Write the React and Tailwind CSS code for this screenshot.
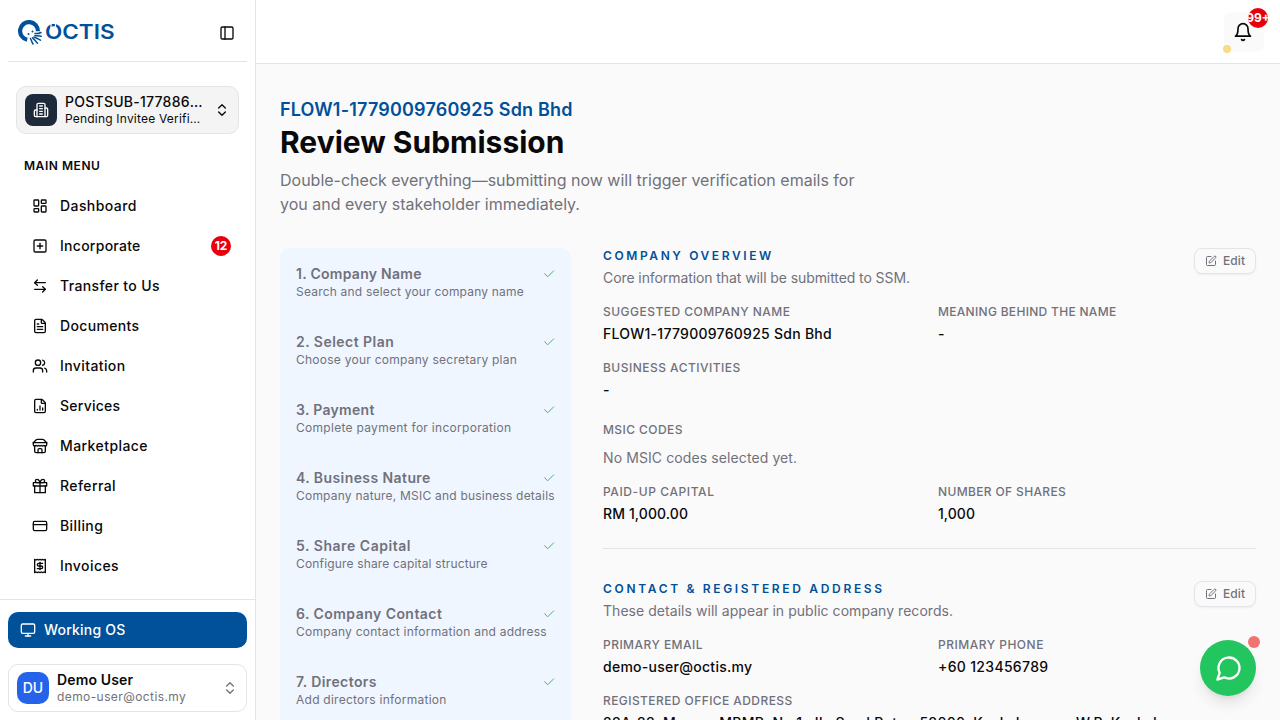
import React from "react";
import {
  PanelLeft,
  ChevronsUpDown,
  LayoutDashboard,
  SquarePlus,
  ArrowLeftRight,
  FileText,
  FileChartColumn,
  CreditCard,
  Monitor,
  SquarePen,
  Users,
} from "lucide-react";

const Icon = ({ size = 16, strokeWidth = 2, children }) => (
  <svg
    width={size}
    height={size}
    viewBox="0 0 24 24"
    fill="none"
    stroke="currentColor"
    strokeWidth={strokeWidth}
    strokeLinecap="round"
    strokeLinejoin="round"
    className="shrink-0"
  >
    {children}
  </svg>
);

const Receipt = () => (
  <Icon>
    <path d="M4 2v20l2-1 2 1 2-1 2 1 2-1 2 1 2-1 2 1V2l-2 1-2-1-2 1-2-1-2 1-2-1-2 1Z" />
    <path d="M16 8h-6a2 2 0 1 0 0 4h4a2 2 0 1 1 0 4H8" />
    <path d="M12 17.5v-11" />
  </Icon>
);

const Building = () => (
  <Icon>
    <path d="M6 22V4a2 2 0 0 1 2-2h8a2 2 0 0 1 2 2v18Z" />
    <path d="M6 12H4a2 2 0 0 0-2 2v6a2 2 0 0 0 2 2h2" />
    <path d="M18 9h2a2 2 0 0 1 2 2v9a2 2 0 0 1-2 2h-2" />
    <path d="M10 6h4M10 10h4M10 14h4M10 18h4" />
  </Icon>
);

const Store = () => (
  <Icon>
    <path d="m2 7 4.41-4.41A2 2 0 0 1 7.83 2h8.34a2 2 0 0 1 1.42.59L22 7" />
    <path d="M4 12v8a2 2 0 0 0 2 2h12a2 2 0 0 0 2-2v-8" />
    <path d="M15 22v-4a2 2 0 0 0-2-2h-2a2 2 0 0 0-2 2v4" />
    <path d="M2 7h20" />
    <path d="M22 7v3a2 2 0 0 1-2 2a2.7 2.7 0 0 1-1.59-.63.7.7 0 0 0-.82 0A2.7 2.7 0 0 1 16 12a2.7 2.7 0 0 1-1.59-.63.7.7 0 0 0-.82 0A2.7 2.7 0 0 1 12 12a2.7 2.7 0 0 1-1.59-.63.7.7 0 0 0-.82 0A2.7 2.7 0 0 1 8 12a2.7 2.7 0 0 1-1.59-.63.7.7 0 0 0-.82 0A2.7 2.7 0 0 1 4 12a2 2 0 0 1-2-2V7" />
  </Icon>
);

const Gift = () => (
  <Icon>
    <path d="M20 12v10H4V12" />
    <path d="M2 7h20v5H2z" />
    <path d="M12 22V7" />
    <path d="M12 7H7.5a2.5 2.5 0 0 1 0-5C11 2 12 7 12 7z" />
    <path d="M12 7h4.5a2.5 2.5 0 0 0 0-5C13 2 12 7 12 7z" />
  </Icon>
);

const Bell = () => (
  <Icon size={20}>
    <path d="M6 8a6 6 0 0 1 12 0c0 7 3 9 3 9H3s3-2 3-9" />
    <path d="M10.3 21a1.94 1.94 0 0 0 3.4 0" />
  </Icon>
);

const menu = [
  { label: "Dashboard", icon: LayoutDashboard, tracking: "tracking-[0.42px]" },
  { label: "Incorporate", icon: SquarePlus, badge: "12", tracking: "tracking-[0.27px]" },
  { label: "Transfer to Us", icon: ArrowLeftRight, tracking: "tracking-[0.38px]" },
  { label: "Documents", icon: FileText, tracking: "tracking-[0.33px]" },
  { label: "Invitation", icon: Users, tracking: "tracking-[0.4px]" },
  { label: "Services", icon: FileChartColumn, tracking: "tracking-[0.25px]" },
  { label: "Marketplace", icon: Store, tracking: "tracking-[0.42px]" },
  { label: "Referral", icon: Gift, tracking: "tracking-[0.42px]" },
  { label: "Billing", icon: CreditCard, tracking: "tracking-[0.4px]" },
  { label: "Invoices", icon: Receipt, tracking: "tracking-[0.42px]" },
];

const steps = [
  { title: "1. Company Name", text: "Search and select your company name", t1: "tracking-[0.27px]", t2: "tracking-[0.2px]" },
  { title: "2. Select Plan", text: "Choose your company secretary plan", t1: "tracking-[0.47px]", t2: "tracking-[0.25px]" },
  { title: "3. Payment", text: "Complete payment for incorporation", t1: "tracking-[0.3px]", t2: "tracking-[0.29px]" },
  { title: "4. Business Nature", text: "Company nature, MSIC and business details", t1: "tracking-[0.42px]", t2: "tracking-[0.21px]" },
  { title: "5. Share Capital", text: "Configure share capital structure", t1: "tracking-[0.54px]", t2: "tracking-[0.16px]" },
  { title: "6. Company Contact", text: "Company contact information and address", t1: "tracking-[0.45px]", t2: "tracking-[0.24px]" },
  { title: "7. Directors", text: "Add directors information", t1: "tracking-[0.4px]", t2: "tracking-[0.25px]" },
];

const Logo = () => (
  <svg width="98" height="27" viewBox="0 0 98 27" className="shrink-0">
    <path d="M9.2 20.7A8.9 8.9 0 1 1 19.9 12.3" fill="none" stroke="#01509a" strokeWidth="4.2" />
    <circle cx="10.5" cy="15" r="1" fill="#01509a" />
    <circle cx="14.5" cy="12.5" r="1" fill="#01509a" />
    <g fill="none" stroke="#01509a" strokeWidth="1.5" strokeLinecap="round">
      <path d="M17 14.5c2.5 .3 4 .2 6-1" />
      <path d="M17 16.5c2.5 .3 4 .8 6.3 .7" />
      <path d="M16 18c2.5 .8 4.3 2 6.5 3.2" />
      <path d="M14.5 18.8c2 1.500 3 3.5 5 5.5" />
      <path d="M12.5 19.5c1 2 1.3 3.7 2.5 5.5" />
    </g>
    <text x="27" y="20" textLength="69.5" lengthAdjust="spacingAndGlyphs" fill="#01509a" className="font-['Inter'] text-[20px] font-semibold">
      OCTIS
    </text>
    {/* notches in the top of the O */}
    <path d="M33 4v5M37.500 4v5" stroke="#fff" strokeWidth="1.2" />
  </svg>
);

const Sidebar = () => (
  <aside className="flex h-full w-64 shrink-0 flex-col border-r border-[#e4e4e7] bg-white">
    <div className="mx-2 flex h-[62px] shrink-0 items-center justify-between border-b border-[#e4e4e7] pt-1 pr-3 pl-2.5">
      <Logo />
      <PanelLeft size={16} />
    </div>

    <div className="px-4 pt-6">
      <div className="flex h-12 items-center gap-2 rounded-[10px] border border-[#e4e4e7] bg-[#f4f4f5] px-2">
        <div className="flex size-8 items-center justify-center rounded-lg bg-[#1e293b] text-white">
          <Building />
        </div>
        <div className="min-w-0 flex-1">
          <div className="truncate text-sm leading-[17.5px] font-medium tracking-[0.25px]">POSTSUB-1778869999</div>
          <div className="truncate text-xs leading-4 tracking-[0.2px]">Pending Invitee Verification</div>
        </div>
        <ChevronsUpDown size={16} />
      </div>
    </div>

    <div className="mt-4 px-2">
      <div className="flex h-8 items-center px-4 text-xs font-semibold tracking-[0.55px]">MAIN MENU</div>
    </div>
    <nav className="flex flex-1 flex-col gap-1 overflow-hidden px-4 pt-1.5">
      {menu.map(({ label, icon: MenuIcon, badge, tracking }) => (
        <div key={label} className="flex h-9 shrink-0 items-center gap-3 pr-2 pl-4 text-sm font-medium">
          <MenuIcon size={16} />
          <span className={`flex-1 ${tracking}`}>{label}</span>
          {badge && (
            <span className="flex size-5 items-center justify-center rounded-full bg-[#e7000b] text-xs font-bold text-white">
              {badge}
            </span>
          )}
        </div>
      ))}
    </nav>

    <div className="shrink-0 border-t border-[#e4e4e7] px-2 pt-3 pb-2">
      <div className="flex h-9 items-center gap-2 rounded-[10px] bg-[#01509a] px-3 text-sm font-medium tracking-[0.2px] text-white">
        <Monitor size={16} />
        Working OS
      </div>
      <div className="mt-4 flex h-12 items-center gap-2 rounded-[10px] border border-[#e4e4e7] px-2">
        <div className="flex size-8 items-center justify-center rounded-[10px] bg-[#2563eb] text-sm font-medium text-white">DU</div>
        <div className="min-w-0 flex-1">
          <div className="text-sm leading-[17.5px] font-semibold tracking-[0.15px]">Demo User</div>
          <div className="text-xs leading-4 tracking-[0.41px] text-[#71717b]">demo-user@octis.my</div>
        </div>
        <ChevronsUpDown size={16} className="text-[#71717b]" />
      </div>
    </div>
  </aside>
);

const TopBar = () => (
  <header className="flex h-16 shrink-0 items-center justify-end border-b border-[#e4e4e7] bg-white px-4">
    <div className="relative flex size-10 items-center justify-center rounded-lg bg-[#fafafa] pr-0.5">
      <Bell />
      <span className="absolute -top-1 -right-1 flex size-5 items-center justify-center overflow-hidden rounded-full bg-[#e7000b] text-xs font-bold text-white">
        99+
      </span>
      <span className="absolute -bottom-px -left-px size-2 rounded-full bg-[#fadb85]" />
    </div>
  </header>
);

const Steps = () => (
  <div className="w-[291px] shrink-0 rounded-[10px] bg-[#eff6ff] px-4 pt-4">
    {steps.map(({ title, text, t1, t2 }) => (
      <div key={title} className="h-[68px] text-[#71717b]">
        <div className="flex items-center justify-between">
          <span className={`text-sm font-semibold ${t1}`}>{title}</span>
          <svg width="12" height="12" viewBox="0 0 12 12" fill="none" stroke="#16a34a" strokeWidth="0.8">
            <path d="M10.9 2.6 4.7 8.8 1.3 5.4" />
          </svg>
        </div>
        <div className={`text-xs whitespace-nowrap ${t2}`}>{text}</div>
      </div>
    ))}
  </div>
);

const SectionHead = ({ title, text, titleClass, textClass }) => (
  <div className="flex items-start justify-between">
    <div>
      <h2 className={`text-xs leading-4 font-semibold text-[#01509a] uppercase ${titleClass}`}>{title}</h2>
      <p className={`mt-1 text-sm text-[#71717b] ${textClass}`}>{text}</p>
    </div>
    <button className="flex h-[26px] w-[62px] items-center justify-center gap-1.5 rounded-lg border border-[#e4e4e7] text-xs font-medium tracking-[0.1px] text-[#71717b] shadow-xs">
      <SquarePen size={12} />
      Edit
    </button>
  </div>
);

const Field = ({ label, value, labelClass = "tracking-[0.3px]", valueClass = "" }) => (
  <div>
    <div className={`text-xs leading-4 font-medium text-[#71717b] uppercase ${labelClass}`}>{label}</div>
    <div className={`mt-1 text-sm font-medium whitespace-nowrap ${valueClass}`}>{value}</div>
  </div>
);

const Review = () => (
  <div className="min-w-0 flex-1">
    <section className="border-b border-[#e4e4e7] pb-6">
      <SectionHead
        title="Company Overview"
        text="Core information that will be submitted to SSM."
        titleClass="tracking-[2.6px]"
        textClass="tracking-[-0.085px]"
      />
      <div className="mt-4 grid grid-cols-[319px_1fr] gap-4">
        <Field
          label="Suggested Company Name"
          value="FLOW1-1779009760925 Sdn Bhd"
          labelClass="tracking-[0.47px]"
          valueClass="tracking-[0.27px]"
        />
        <Field label="Meaning Behind The Name" value="-" />
        <Field label="Business Activities" value="-" labelClass="tracking-[0.48px]" />
      </div>
      <div className="mt-[22px]">
        <div className="text-xs leading-4 font-medium tracking-[0.42px] text-[#71717b]">MSIC CODES</div>
        <div className="mt-2 text-sm leading-6 tracking-[0.1px] text-[#71717b]">No MSIC codes selected yet.</div>
      </div>
      <div className="mt-3.5 grid grid-cols-[319px_1fr] gap-4">
        <Field label="Paid-up Capital" value="RM 1,000.00" labelClass="tracking-[0.59px]" valueClass="tracking-[0.1px]" />
        <Field label="Number Of Shares" value="1,000" labelClass="tracking-[0.36px]" valueClass="tracking-[0.05px]" />
      </div>
    </section>
    <section className="pt-8">
      <SectionHead
        title="Contact & Registered Address"
        text="These details will appear in public company records."
        titleClass="tracking-[2.67px]"
        textClass="tracking-[0.045px]"
      />
      <div className="mt-4 grid grid-cols-[319px_1fr] gap-4">
        <Field label="Primary Email" value="demo-user@octis.my" labelClass="tracking-[0.46px]" valueClass="tracking-[0.27px]" />
        <Field label="Primary Phone" value="+60 123456789" labelClass="tracking-[0.5px]" valueClass="tracking-[0.32px]" />
        <Field
          label="Registered Office Address"
          value="23A-23, Menara MBMR, No 1, Jln Syed Putra, 58000, Kuala Lumpur, W.P. Kuala Lumpur"
          labelClass="tracking-[0.42px]"
          valueClass="tracking-[0.27px]"
        />
      </div>
    </section>
  </div>
);

export default function App() {
  return (
    <div className="flex h-screen w-screen overflow-hidden bg-[#fafafa] font-['Inter',sans-serif] text-[#09090b]">
      <Sidebar />
      <div className="flex min-w-0 flex-1 flex-col">
        <TopBar />
        <main className="flex-1 overflow-hidden px-6 pt-8">
          <p className="text-lg leading-7 font-semibold tracking-[0.18px] text-[#01509a]">FLOW1-1779009760925 Sdn Bhd</p>
          <h1 className="text-3xl leading-9 font-bold">Review Submission</h1>
          <p className="mt-2 w-[600px] text-base leading-6 text-[#71717b]">
            Double-check everything—submitting now will trigger verification emails for
            <br />
            you and every stakeholder immediately.
          </p>
          <div className="mt-8 flex gap-8">
            <Steps />
            <Review />
          </div>
        </main>
      </div>

      {/* chat bubble */}
      <div className="absolute right-6 bottom-6 flex size-14 items-center justify-center rounded-full bg-[#22c55e] pl-px text-white shadow-lg">
        <Icon size={28}>
          <path d="M7.9 20A9 9 0 1 0 4 16.1L2 22Z" />
        </Icon>
        <span className="absolute -top-1 -right-1 size-3 rounded-full bg-[#f27272]" />
      </div>
    </div>
  );
}
